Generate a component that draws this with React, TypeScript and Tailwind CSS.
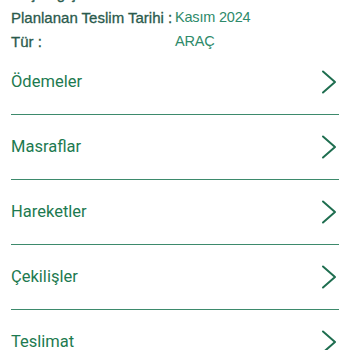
import React from "react";

const Chevron = () => (
  <svg width="18" height="24" viewBox="0 0 18 24" fill="none">
    <path d="M3 1.5 L15 12 L3 22.5" stroke="#1f6e50" strokeWidth="2" strokeLinecap="round" strokeLinejoin="round" />
  </svg>
);

const rows: [string, string][] = [
  ["Başlangıç Tarihi :", "20.06.2024"],
  ["Planlanan Teslim Tarihi :", "Kasım 2024"],
  ["Tür :", "ARAÇ"],
];

const items = ["Ödemeler", "Masraflar", "Hareketler", "Çekilişler", "Teslimat"];

export default function App() {
  return (
    <div className="w-[350px] h-[350px] overflow-hidden bg-white" style={{ fontFamily: 'Roboto, "Liberation Sans", Arial, sans-serif' }}>
      <div className="-mt-[18px] px-[11px] font-['Liberation_Sans',Arial,sans-serif]">
        {rows.map(([k, v]) => (
          <div key={k} className="flex h-[24px] items-center">
            <span className="w-[164px] shrink-0 whitespace-nowrap text-[15px] text-[#2a5a4c] [-webkit-text-stroke:0.3px_#2a5a4c]">{k}</span>
            <span className="whitespace-nowrap text-[14.5px] tracking-[-0.2px] text-[#2e8a6a]">{v}</span>
          </div>
        ))}
      </div>
      <div className="-mt-[4px] px-[11px]">
        {items.map((t, i) => (
          <div key={t}>
            <div className="flex h-[64px] items-center justify-between">
              <span className="text-[16.5px] text-[#1d7a50]">{t}</span>
              <span className="mr-[1px]"><Chevron /></span>
            </div>
            {i < items.length - 1 && <div className="h-px bg-[#3d8a6c]" />}
          </div>
        ))}
      </div>
    </div>
  );
}
